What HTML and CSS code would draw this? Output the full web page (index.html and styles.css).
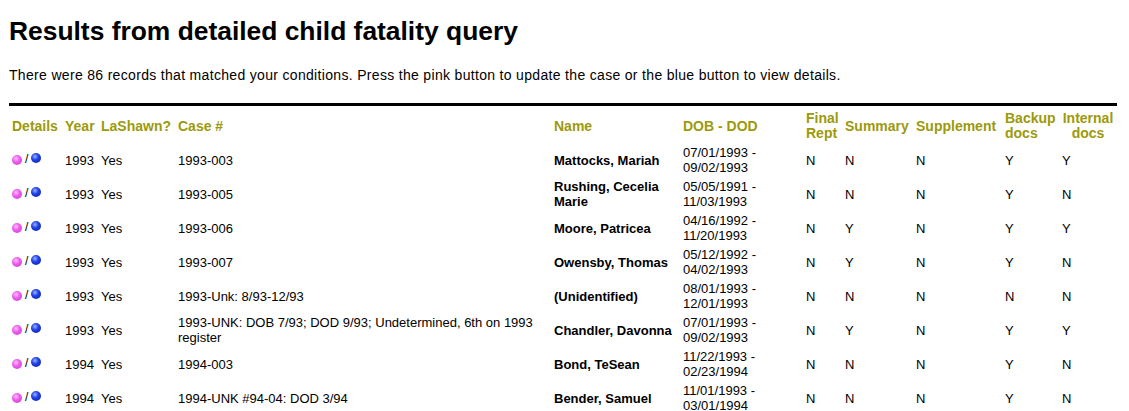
FILE: index.html
```html
<!DOCTYPE html>
<html>
<head>
<meta charset="utf-8">
<link rel="stylesheet" href="styles.css">
</head>
<body>
<h1 class="title">Results from detailed child fatality query</h1>
<p class="intro">There were 86 records that matched your conditions. Press the pink button to update the case or the blue button to view details.</p>
<div class="rule"></div>
<table class="results">
<colgroup>
<col class="c-det"><col class="c-year"><col class="c-lash"><col class="c-case"><col class="c-name"><col class="c-dob"><col class="c-final"><col class="c-sum"><col class="c-sup"><col class="c-back"><col class="c-int">
</colgroup>
<thead>
<tr>
<th>Details</th><th>Year</th><th>LaShawn?</th><th>Case #</th><th>Name</th><th>DOB - DOD</th><th>Final<br>Rept</th><th>Summary</th><th>Supplement</th><th>Backup<br>docs</th><th class="center">Internal<br>docs</th>
</tr>
</thead>
<tbody>
<tr><td><span class="btns"><span class="ball pink"></span>/<span class="ball blue"></span></span></td><td>1993</td><td>Yes</td><td>1993-003</td><td class="name">Mattocks, Mariah</td><td>07/01/1993 - 09/02/1993</td><td>N</td><td>N</td><td>N</td><td>Y</td><td>Y</td></tr>
<tr><td><span class="btns"><span class="ball pink"></span>/<span class="ball blue"></span></span></td><td>1993</td><td>Yes</td><td>1993-005</td><td class="name">Rushing, Cecelia Marie</td><td>05/05/1991 - 11/03/1993</td><td>N</td><td>N</td><td>N</td><td>Y</td><td>N</td></tr>
<tr><td><span class="btns"><span class="ball pink"></span>/<span class="ball blue"></span></span></td><td>1993</td><td>Yes</td><td>1993-006</td><td class="name">Moore, Patricea</td><td>04/16/1992 - 11/20/1993</td><td>N</td><td>Y</td><td>N</td><td>Y</td><td>Y</td></tr>
<tr><td><span class="btns"><span class="ball pink"></span>/<span class="ball blue"></span></span></td><td>1993</td><td>Yes</td><td>1993-007</td><td class="name">Owensby, Thomas</td><td>05/12/1992 - 04/02/1993</td><td>N</td><td>Y</td><td>N</td><td>Y</td><td>N</td></tr>
<tr><td><span class="btns"><span class="ball pink"></span>/<span class="ball blue"></span></span></td><td>1993</td><td>Yes</td><td>1993-Unk: 8/93-12/93</td><td class="name">(Unidentified)</td><td>08/01/1993 - 12/01/1993</td><td>N</td><td>N</td><td>N</td><td>N</td><td>N</td></tr>
<tr><td><span class="btns"><span class="ball pink"></span>/<span class="ball blue"></span></span></td><td>1993</td><td>Yes</td><td>1993-UNK: DOB 7/93; DOD 9/93; Undetermined, 6th on 1993 register</td><td class="name">Chandler, Davonna</td><td>07/01/1993 - 09/02/1993</td><td>N</td><td>Y</td><td>N</td><td>Y</td><td>Y</td></tr>
<tr><td><span class="btns"><span class="ball pink"></span>/<span class="ball blue"></span></span></td><td>1994</td><td>Yes</td><td>1994-003</td><td class="name">Bond, TeSean</td><td>11/22/1993 - 02/23/1994</td><td>N</td><td>N</td><td>N</td><td>Y</td><td>N</td></tr>
<tr><td><span class="btns"><span class="ball pink"></span>/<span class="ball blue"></span></span></td><td>1994</td><td>Yes</td><td>1994-UNK #94-04: DOD 3/94</td><td class="name">Bender, Samuel</td><td>11/01/1993 - 03/01/1994</td><td>N</td><td>N</td><td>N</td><td>Y</td><td>N</td></tr>
</tbody>
</table>
</body>
</html>
```
FILE: styles.css
```css
body {
  margin: 0;
  padding: 0 9px;
  font-family: "Liberation Sans", Arial, sans-serif;
  color: #000;
  background: #fff;
}
.title {
  margin: 0;
  padding-top: 15px;
  font-size: 26.4px;
  line-height: 32px;
  font-weight: bold;
  color: #000;
}
.intro {
  margin: 0;
  padding-top: 20px;
  font-size: 14px;
  letter-spacing: 0.32px;
  line-height: 16px;
}
.rule {
  margin-top: 20px;
  height: 3px;
  background: #000;
  width: 1108px;
}
.results {
  margin-top: 3px;
  border-collapse: collapse;
  table-layout: fixed;
  width: 1108px;
  font-size: 13px;
  line-height: 15px;
}
.results th, .results td {
  padding: 2px 3px;
  text-align: left;
  vertical-align: middle;
}
.results th {
  color: #9c9a0a;
  font-weight: bold;
  font-size: 14px;
  white-space: nowrap;
}
.results th.center { text-align: center; }
.c-det { width: 53px; }
.c-year { width: 36px; }
.c-lash { width: 77px; }
.c-case { width: 376px; }
.c-name { width: 129px; }
.c-dob { width: 123px; }
.c-final { width: 39px; }
.c-sum { width: 71px; }
.c-sup { width: 89px; }
.c-back { width: 57px; }
.c-int { width: 58px; }
.name { font-weight: bold; }
.btns {
  display: inline-flex;
  align-items: center;
  gap: 3px;
  font-size: 12px;
}
.ball {
  display: inline-block;
  width: 10px;
  height: 10px;
  border-radius: 50%;
}
.pink {
  background: radial-gradient(circle at 40% 35%, #ffc0ff 0, #ee5cee 40%, #c83ad0 100%);
  margin-top: 2px;
}
.blue {
  background: radial-gradient(circle at 40% 35%, #9ab0ff 0, #1d3fe6 40%, #0c2098 100%);
  margin-top: -2px;
}
```
